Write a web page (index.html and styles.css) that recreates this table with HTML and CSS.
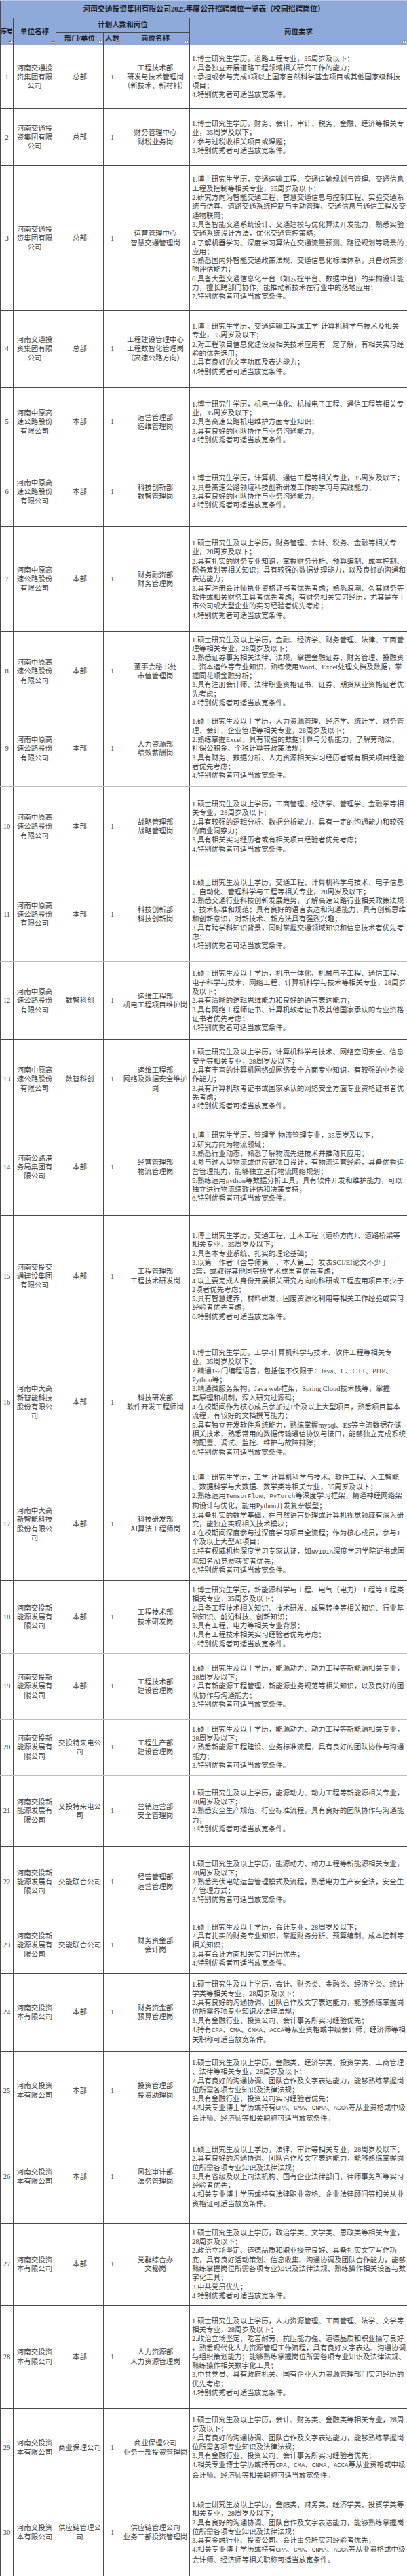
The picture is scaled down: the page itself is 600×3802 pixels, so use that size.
FILE: index.html
```html
<!DOCTYPE html>
<html lang="zh-CN">
<head>
<meta charset="utf-8">
<title>河南交通投资集团有限公司2025年度公开招聘岗位一览表（校园招聘岗位）</title>
<link rel="stylesheet" href="styles.css">
</head>
<body>
<table class="sheet">
<colgroup>
<col class="c-no"><col class="c-unit"><col class="c-dept"><col class="c-num"><col class="c-post"><col class="c-req">
</colgroup>
<thead>
<tr class="title"><th colspan="6">河南交通投资集团有限公司2025年度公开招聘岗位一览表（校园招聘岗位）</th></tr>
<tr class="hr1">
<th rowspan="2" class="sn">序号<i class="flt"></i></th>
<th rowspan="2">单位名称<i class="flt"></i></th>
<th colspan="3">计划人数和岗位</th>
<th rowspan="2">岗位要求<i class="flt"></i></th>
</tr>
<tr class="hr2">
<th>部门/单位<i class="flt"></i></th>
<th class="nw">人数<i class="flt"></i></th>
<th>岗位名称<i class="flt"></i></th>
</tr>
</thead>
<tbody>
<tr><td>1</td><td>河南交通投资集团有限公司</td><td>总部</td><td>1</td><td>工程技术部<br>研发与技术管理岗<br>（新技术、新材料）</td><td class="req">1.博士研究生学历，道路工程专业，35周岁及以下；<br>2.具备独立开展道路工程领域相关研究工作的能力；<br>3.承担或参与完成1项以上国家自然科学基金项目或其他国家级科技<br>项目；<br>4.特别优秀者可适当放宽条件。</td></tr>
<tr><td>2</td><td>河南交通投资集团有限公司</td><td>总部</td><td>1</td><td>财务管理中心<br>财税业务岗</td><td class="req">1.博士研究生学历，财务、会计、审计、税务、金融、经济等相关专<br>业，35周岁及以下；<br>2.参与过税收相关项目或课题；<br>3.特别优秀者可适当放宽条件。</td></tr>
<tr><td>3</td><td>河南交通投资集团有限公司</td><td>总部</td><td>1</td><td>运营管理中心<br>智慧交通管理岗</td><td class="req">1.博士研究生学历，交通运输工程、交通运输规划与管理、交通信息<br>工程及控制等相关专业，35周岁及以下；<br>2.研究方向为智能交通工程、智慧交通信息与控制工程、实验交通系<br>统与仿真、道路交通系统控制与主动管理、交通信息与通信工程及交<br>通物联网；<br>3.具备智能交通系统设计、交通建模与优化算法开发能力，熟悉实验<br>交通系统设计方法，优化交通管控策略；<br>4.了解机器学习、深度学习算法在交通流量预测、路径规划等场景的<br>应用；<br>5.熟悉国内外智能交通政策法规、交通信息化标准体系，具备政策影<br>响评估能力；<br>6.具备大型交通信息化平台（如云控平台、数据中台）的架构设计能<br>力，擅长跨部门协作，能推动新技术在行业中的落地应用；<br>7.特别优秀者可适当放宽条件。</td></tr>
<tr><td>4</td><td>河南交通投资集团有限公司</td><td>总部</td><td>1</td><td>工程建设管理中心<br>工程数智化管理岗<br>（高速公路方向）</td><td class="req">1.博士研究生学历，交通运输工程或工学-计算机科学与技术及相关<br>专业，35周岁及以下；<br>2.对工程项目信息化建设及相关技术应用有一定了解，有相关实习经<br>验的优先选用；<br>3.具有良好的文字功底及表达能力；<br>4.特别优秀者可适当放宽条件。</td></tr>
<tr><td>5</td><td>河南中原高速公路股份有限公司</td><td>本部</td><td>1</td><td>运营管理部<br>运维管理岗</td><td class="req">1.博士研究生学历，机电一体化、机械电子工程、通信工程等相关专<br>业，35周岁及以下；<br>2.具备高速公路机电维护方面专业知识；<br>3.具有良好的团队协作与业务沟通能力；<br>4.特别优秀者可适当放宽条件。</td></tr>
<tr><td>6</td><td>河南中原高速公路股份有限公司</td><td>本部</td><td>1</td><td>科技创新部<br>数智管理岗</td><td class="req">1.博士研究生学历，计算机、通信工程等相关专业，35周岁及以下；<br>2.具备高速公路领域科技创新研发工作的学习与实践能力；<br>3.具有良好的团队协作与业务沟通能力；<br>4.特别优秀者可适当放宽条件。</td></tr>
<tr><td>7</td><td>河南中原高速公路股份有限公司</td><td>本部</td><td>1</td><td>财务融资部<br>财务管理岗</td><td class="req">1.硕士研究生及以上学历，财务管理、会计、税务、金融等相关专<br>业，28周岁及以下；<br>2.具有扎实的财务专业知识，掌握财务分析、预算编制、成本控制、<br>税务筹划等相关知识；具有较强的数据处理能力，以及良好的沟通和<br>表达能力；<br>3.具有注册会计师执业资格证书者优先考虑；熟悉浪潮、久其财务等<br>软件或相关财务工具者优先考虑；有财务相关实习经历，尤其是在上<br>市公司或大型企业的实习经验者优先考虑；<br>4.特别优秀者可适当放宽条件。</td></tr>
<tr class="lt"><td>8</td><td>河南中原高速公路股份有限公司</td><td>本部</td><td>1</td><td>董事会秘书处<br>市值管理岗</td><td class="req">1.硕士研究生及以上学历，金融、经济学、财务管理、法律、工商管<br>理等相关专业，28周岁及以下；<br>2.熟悉证券事务相关法律、法规，掌握金融证券、财务管理、投融资<br>、资本运作等专业知识，熟练使用Word、Excel处理文档及数据，掌<br>握同花顺金融分析；<br>3.具有注册会计师、法律职业资格证书、证券、期货从业资格证者优<br>先考虑；<br>4.特别优秀者可适当放宽条件。</td></tr>
<tr class="lt"><td>9</td><td>河南中原高速公路股份有限公司</td><td>本部</td><td>1</td><td>人力资源部<br>绩效薪酬岗</td><td class="req">1.硕士研究生及以上学历，人力资源管理、经济学、统计学、财务管<br>理、会计、企业管理等相关专业，28周岁及以下；<br>2.熟练掌握Excel，具有较强的数据计算与分析能力，了解劳动法、<br>社保公积金、个税计算等政策法规；<br>3.具有财务、数据分析、人力资源相关实习经历者或有相关项目经验<br>者优先考虑；<br>4.特别优秀者可适当放宽条件。</td></tr>
<tr class="lt"><td>10</td><td>河南中原高速公路股份有限公司</td><td>本部</td><td>1</td><td>战略管理部<br>战略管理岗</td><td class="req">1.硕士研究生及以上学历，工商管理、经济学、管理学、金融学等相<br>关专业，28周岁及以下；<br>2.具有较强的逻辑分析、数据分析能力，具有一定的沟通能力和较强<br>的商业洞察力；<br>3.具有相关实习经历者或有相关项目经验者优先考虑；<br>4.特别优秀者可适当放宽条件。</td></tr>
<tr class="lt"><td>11</td><td>河南中原高速公路股份有限公司</td><td>本部</td><td>1</td><td>科技创新部<br>科技创新岗</td><td class="req">1.硕士研究生及以上学历，交通工程、计算机科学与技术、电子信息<br>、自动化、管理科学与工程等相关专业，28周岁及以下；<br>2.熟悉交通行业科技创新发展趋势，了解高速公路行业相关政策法规<br>、技术标准和规范；具有良好的语言表达和沟通能力、具有创新思维<br>和创新意识，对新技术、新方法具有强烈兴趣；<br>3.具有跨学科知识背景，同时掌握交通领域知识和信息技术者优先考<br>虑；<br>4.特别优秀者可适当放宽条件。</td></tr>
<tr><td>12</td><td>河南中原高速公路股份有限公司</td><td>数智科创</td><td>1</td><td>运维工程部<br>机电工程项目维护岗</td><td class="req">1.硕士研究生及以上学历，机电一体化、机械电子工程、通信工程、<br>电子科学与技术、网络工程、计算机科学与技术等相关专业，28周岁<br>及以下；<br>2.具有清晰的逻辑思维能力和良好的语言表达能力；<br>3.具有网络工程师证书、计算机软考证书及其他国家承认的专业资格<br>证书者优先考虑；<br>4.特别优秀者可适当放宽条件。</td></tr>
<tr><td>13</td><td>河南中原高速公路股份有限公司</td><td>数智科创</td><td>1</td><td>运维工程部<br>网络及数据安全维护岗</td><td class="req">1.硕士研究生及以上学历，计算机科学与技术、网络空间安全、信息<br>安全等相关专业，28周岁及以下；<br>2.具有丰富的计算机网络或网络安全方面专业知识，有较强的业务操<br>作能力；<br>3.具有计算机软考证书或国家承认的网络安全方面专业资格证书者优<br>先考虑；<br>4.特别优秀者可适当放宽条件。</td></tr>
<tr><td>14</td><td>河南公路港务局集团有限公司</td><td>本部</td><td>1</td><td>经营管理部<br>物流管理岗</td><td class="req">1.博士研究生学历，管理学-物流管理专业，35周岁及以下；<br>2.研究方向为物流领域；<br>3.熟悉行业动态，熟悉了解物流先进技术并推动其应用；<br>4.参与过大型物流或供应链项目设计，有物流运营经验，具备优秀运<br>营管理能力，能够独立进行物流网络规划；<br>5.熟练运用python等数据分析工具，具有软件开发和维护能力，可以<br>独立进行物流绩效评估和决策支持；<br>6.特别优秀者可适当放宽条件。</td></tr>
<tr><td>15</td><td>河南交投交通建设集团有限公司</td><td>本部</td><td>1</td><td>工程管理部<br>工程技术研发岗</td><td class="req">1.博士研究生学历，交通工程、土木工程（道桥方向）、道路桥梁等<br>相关专业，35周岁及以下；<br>2.具备本专业系统、扎实的理论基础；<br>3.以第一作者（含导师第一，本人第二）发表SCI/EI论文不少于<br>2篇，或取得其他同等级学术成果者优先考虑；<br>4.以主要完成人身份开展相关研究方向的科研或工程应用项目不少于<br>2项者优先考虑；<br>5.具有智慧建养、材料研发、固废资源化利用等相关工作经验或实习<br>经验者优先考虑；<br>6.特别优秀者可适当放宽条件。</td></tr>
<tr><td>16</td><td>河南中大高新智能科技股份有限公司</td><td>本部</td><td>1</td><td>科技研发部<br>软件开发工程师岗</td><td class="req">1.博士研究生学历，工学-计算机科学与技术、软件工程等相关专<br>业，35周岁及以下；<br>2.精通1-2门编程语言，包括但不仅限于：Java、C、C++、PHP、<br>Python等；<br>3.精通微服务架构，Java web框架，Spring Cloud技术栈等，掌握<br>其原理和机制，深入研究过源码；<br>4.在校期间作为核心成员参加过1个及以上大型项目，熟悉项目基本<br>流程，有较好的文档撰写能力；<br>5.具有独立开发软件系统能力，熟练掌握mysql、ES等主流数据存储<br>相关技术，熟悉常用的数据传输通信协议与接口，能够独立完成系统<br>的配置、调试、监控、维护与故障排除；<br>6.特别优秀者可适当放宽条件。</td></tr>
<tr><td>17</td><td>河南中大高新智能科技股份有限公司</td><td>本部</td><td>1</td><td>科技研发部<br>AI算法工程师岗</td><td class="req">1.博士研究生学历，工学-计算机科学与技术、软件工程、人工智能<br>、数据科学与大数据、数学类等相关专业，35周岁及以下；<br>2.熟练运用<span class="en">TensorFlow</span>、<span class="en">PyTorch</span>等深度学习框架，精通神经网络架<br>构设计与优化，能用Python开发复杂模型；<br>3.具备扎实的数学基础，在自然语言处理或计算机视觉领域有深入研<br>究，能独立实现相关技术模块；<br>4.在校期间深度参与过深度学习项目全流程；作为核心成员，参与1<br>个及以上大型AI项目；<br>5.持有权威机构深度学习专家认证，如<span class="en">NVIDIA</span>深度学习学院证书或国<br>际知名AI竞赛获奖者优先；<br>6.特别优秀者可适当放宽条件。</td></tr>
<tr class="lt"><td>18</td><td>河南交投新能源发展有限公司</td><td>本部</td><td>1</td><td>工程技术部<br>技术研发岗</td><td class="req">1.博士研究生学历，新能源科学与工程、电气（电力）工程等工程类<br>相关专业，35周岁及以下；<br>2.具备工程技术相关知识、技术研发、成果转换等相关知识、行业基<br>础知识、前沿科技、创新知识；<br>3.具有工程、电力等相关专业背景；<br>4.具有工程技术相关实习经验者优先考虑；<br>5.特别优秀者可适当放宽条件。</td></tr>
<tr class="lt"><td>19</td><td>河南交投新能源发展有限公司</td><td>本部</td><td>1</td><td>工程技术部<br>建设管理岗</td><td class="req">1.硕士研究生及以上学历，能源动力、动力工程等新能源相关专业，<br>28周岁及以下；<br>2.具有新能源工程管理，新能源业务规范等相关知识，以及良好的团<br>队协作与沟通能力；<br>3.特别优秀者可适当放宽条件。</td></tr>
<tr class="lt"><td>20</td><td>河南交投新能源发展有限公司</td><td>交投特来电公司</td><td>1</td><td>工程生产部<br>建设管理岗</td><td class="req">1.硕士研究生及以上学历，能源动力、动力工程等新能源相关专业，<br>28周岁及以下；<br>2.熟悉新能源工程建设、业务标准流程，具有良好的团队协作与沟通<br>能力；<br>3.特别优秀者可适当放宽条件。</td></tr>
<tr><td>21</td><td>河南交投新能源发展有限公司</td><td>交投特来电公司</td><td>1</td><td>营销运营部<br>安全管理岗</td><td class="req">1.硕士研究生及以上学历，能源动力、动力工程等新能源相关专业，<br>28周岁及以下；<br>2.熟悉安全生产规范、行业标准流程，具有良好的团队协作与沟通能<br>力；<br>3.特别优秀者可适当放宽条件。</td></tr>
<tr><td>22</td><td>河南交投新能源发展有限公司</td><td>交能联合公司</td><td>1</td><td>经营管理部<br>运营管理岗</td><td class="req">1.硕士研究生及以上学历，能源动力、动力工程等新能源相关专业，<br>28周岁及以下；<br>2.熟悉光伏电站运营管理模式及流程，熟悉电力生产安全法，安全生<br>产管理方式；<br>3.特别优秀者可适当放宽条件。</td></tr>
<tr><td>23</td><td>河南交投新能源发展有限公司</td><td>交能联合公司</td><td>1</td><td>财务资金部<br>会计岗</td><td class="req">1.硕士研究生及以上学历，会计专业，28周岁及以下；<br>2.具有扎实的财务专业知识，掌握财务分析、预算编制、成本控制等<br>相关知识；<br>3.具有会计方面相关实习经历优先；<br>4.特别优秀者可适当放宽条件。</td></tr>
<tr><td>24</td><td>河南交投资本有限公司</td><td>本部</td><td>1</td><td>财务资金部<br>预算管理岗</td><td class="req">1.硕士研究生及以上学历，会计、财务类、金融类、经济学类、统计<br>学类等相关专业，28周岁及以下；<br>2.具有良好的沟通协调、团队合作及文字表达能力，能够熟练掌握岗<br>位所需各项专业知识及法律法规；<br>3.具有金融行业、投资公司、会计事务所实习经验优先；<br>4.持有<span class="en">CPA</span>、<span class="en">CMA</span>、<span class="en">CNMA</span>、<span class="en">ACCA</span>等从业资格或中级会计师、经济师等相<br>关职称可适当放宽条件。</td></tr>
<tr><td>25</td><td>河南交投资本有限公司</td><td>本部</td><td>1</td><td>投资管理部<br>投资助理岗</td><td class="req">1.硕士研究生及以上学历，金融类、经济学类、投资学类、工商管理<br>、法律等相关专业，28周岁及以下；<br>2.具有良好的沟通协调、团队合作及文字表达能力，能够熟练掌握岗<br>位所需各项专业知识及法律法规；<br>3.具有金融行业、投资公司实习经验者优先；<br>4.相关专业博士学历或持有<span class="en">CPA</span>、<span class="en">CMA</span>、<span class="en">CNMA</span>、<span class="en">ACCA</span>等从业资格或中级<br>会计师、经济师等相关职称可适当放宽条件。</td></tr>
<tr><td>26</td><td>河南交投资本有限公司</td><td>本部</td><td>1</td><td>风控审计部<br>法务管理岗</td><td class="req">1.硕士研究生及以上学历，法律、审计等相关专业，28周岁及以下；<br>2.具有良好的沟通协调、团队合作及文字表达能力，能够熟练掌握岗<br>位所需各项专业知识及法律法规；<br>3.具有省级及以上司法机构、国有企业法律部门、律师事务所等实习<br>经验者优先；<br>4.相关专业博士学历或持有法律职业资格、企业法律顾问等相关从业<br>资格证可适当放宽条件。</td></tr>
<tr><td>27</td><td>河南交投资本有限公司</td><td>本部</td><td>1</td><td>党群综合办<br>文秘岗</td><td class="req">1.硕士研究生及以上学历，政治学类、文学类、思政类等相关专业，<br>28周岁及以下；<br>2.政治立场坚定、道德品质和职业操守良好、具备扎实文字写作功<br>底，具有良好活动策划、信息收集、沟通协调及团队合作能力，能够<br>熟练掌握岗位所需各项专业知识及法律法规、熟练操作相关设备与数<br>字化工具；<br>3.中共党员优先；<br>4.特别优秀者可适当放宽条件。</td></tr>
<tr><td>28</td><td>河南交投资本有限公司</td><td>本部</td><td>1</td><td>人力资源部<br>人力资源管理岗</td><td class="req">1.硕士研究生及以上学历，人力资源管理、工商管理、法学、文学等<br>相关专业，28周岁及以下；<br>2.政治立场坚定、吃苦耐劳、抗压能力强、道德品质和职业操守良好<br>，熟悉现代化人力资源管理工作流程，具有良好文字表达、沟通协调<br>与组织策划能力；能够熟练掌握岗位所需各项专业知识及法律法规、<br>熟练操作相关数字化工具；<br>3.中共党员、具有政府机关、国有企业人力资源管理部门实习经历的<br>优先考虑；<br>4.特别优秀者可适当放宽条件。</td></tr>
<tr><td>29</td><td>河南交投资本有限公司</td><td>商业保理公司</td><td>1</td><td>商业保理公司<br>业务一部投资管理岗</td><td class="req">1.硕士研究生及以上学历，会计、财务类、金融类等相关专业，28周<br>岁及以下；<br>2.具有良好的沟通协调、团队合作及文字表达能力，能够熟练掌握岗<br>位所需各项专业知识及法律法规；<br>3.具有金融行业、投资公司、会计事务所实习经验者优先；<br>4.相关专业博士学历或持有<span class="en">CPA</span>、<span class="en">CMA</span>、<span class="en">CNMA</span>、<span class="en">ACCA</span>等从业资格或中级<br>会计师、经济师等相关职称可适当放宽条件。</td></tr>
<tr><td>30</td><td>河南交投资本有限公司</td><td>供应链管理公司</td><td>1</td><td>供应链管理公司<br>业务二部投资管理岗</td><td class="req">1.硕士研究生及以上学历，金融类、财务类、经济学类、投资学类等<br>相关专业，28周岁及以下；<br>2.具有良好的沟通协调、团队合作及文字表达能力，能够熟练掌握岗<br>位所需各项专业知识及法律法规；<br>3.具有金融行业、投资公司、会计事务所实习经验者优先；<br>4.相关专业博士学历或持有<span class="en">CPA</span>、<span class="en">CMA</span>、<span class="en">CNMA</span>、<span class="en">ACCA</span>等从业资格或中级<br>会计师、经济师等相关职称可适当放宽条件。</td></tr>
</tbody>
</table>
</body>
</html>
```

FILE: styles.css
```css
html, body {
  margin: 0;
  padding: 0;
  background: #ffffff;
}

body {
  font-family: "Liberation Serif", "Noto Sans CJK SC", serif;
  color: #3d3d3d;
}

.sheet {
  width: 600px;
  border-collapse: collapse;
  table-layout: fixed;
  font-size: 10.5px;
  line-height: 13.33px;
}

.c-no { width: 19px; }
.c-unit { width: 63px; }
.c-dept { width: 70px; }
.c-num { width: 26px; }
.c-post { width: 101px; }
.c-req { width: 321px; }

.sheet th,
.sheet td {
  border: 1px solid #4a4a4a;
  padding: 0 2px;
  text-align: center;
  vertical-align: middle;
  overflow: hidden;
}

.sheet thead th {
  background: #8eaadb;
  color: #1f1f1f;
  font-weight: bold;
  position: relative;
  white-space: nowrap;
}

.title th {
  height: 25px;
  font-size: 10.8px;
  border-top-color: #b8c8e6;
}

.hr1 th { height: 20px; }
.hr2 th { height: 18px; }

.sheet thead th.sn {
  padding: 0;
  font-size: 8.6px;
  letter-spacing: -0.2px;
}

.nw { padding: 0; }

.flt {
  position: absolute;
  right: 1px;
  bottom: 1px;
  width: 6px;
  height: 6px;
  background: #f4f4f4;
  border: 1px solid #9a9a9a;
  box-sizing: border-box;
}

.flt::after {
  content: "";
  position: absolute;
  left: 1px;
  top: 1px;
  border-left: 1.5px solid transparent;
  border-right: 1.5px solid transparent;
  border-top: 2px solid #444;
}

.sheet td.req {
  text-align: left;
  padding: 0 1px 0 3px;
  white-space: nowrap;
}

.en {
  font-family: "Liberation Mono", monospace;
  font-size: 9px;
}

.sheet tbody tr.lt td {
  border-bottom-color: #bdbdbd;
}

.sheet tbody tr:nth-child(1) { height: 94px; }
.sheet tbody tr:nth-child(2) { height: 84px; }
.sheet tbody tr:nth-child(3) { height: 214px; }
.sheet tbody tr:nth-child(4) { height: 113px; }
.sheet tbody tr:nth-child(5) { height: 103px; }
.sheet tbody tr:nth-child(6) { height: 103px; }
.sheet tbody tr:nth-child(7) { height: 155px; }
.sheet tbody tr:nth-child(8) { height: 117px; }
.sheet tbody tr:nth-child(9) { height: 111px; }
.sheet tbody tr:nth-child(10) { height: 119px; }
.sheet tbody tr:nth-child(11) { height: 140px; }
.sheet tbody tr:nth-child(12) { height: 115px; }
.sheet tbody tr:nth-child(13) { height: 117px; }
.sheet tbody tr:nth-child(14) { height: 142px; }
.sheet tbody tr:nth-child(15) { height: 180px; }
.sheet tbody tr:nth-child(16) { height: 193px; }
.sheet tbody tr:nth-child(17) { height: 166px; }
.sheet tbody tr:nth-child(18) { height: 108px; }
.sheet tbody tr:nth-child(19) { height: 97px; }
.sheet tbody tr:nth-child(20) { height: 83px; }
.sheet tbody tr:nth-child(21) { height: 105px; }
.sheet tbody tr:nth-child(22) { height: 104px; }
.sheet tbody tr:nth-child(23) { height: 83px; }
.sheet tbody tr:nth-child(24) { height: 115px; }
.sheet tbody tr:nth-child(25) { height: 116px; }
.sheet tbody tr:nth-child(26) { height: 138px; }
.sheet tbody tr:nth-child(27) { height: 121px; }
.sheet tbody tr:nth-child(28) { height: 152px; }
.sheet tbody tr:nth-child(29) { height: 116px; }
.sheet tbody tr:nth-child(30) { height: 134px; }
```
